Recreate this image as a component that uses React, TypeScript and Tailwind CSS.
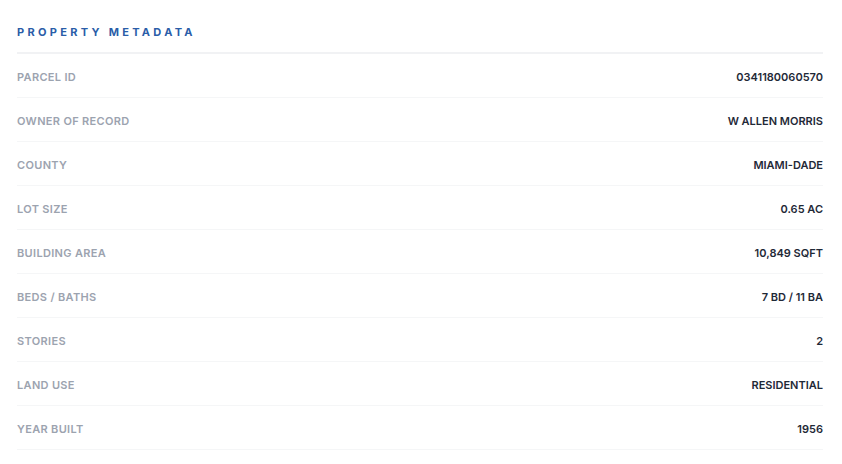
const rows = [
  { label: "Parcel ID", value: "0341180060570" },
  { label: "Owner of Record", value: "W ALLEN MORRIS" },
  { label: "County", value: "MIAMI-DADE" },
  { label: "Lot Size", value: "0.65 AC" },
  { label: "Building Area", value: "10,849 SQFT" },
  { label: "Beds / Baths", value: "7 BD / 11 BA" },
  { label: "Stories", value: "2" },
  { label: "Land Use", value: "RESIDENTIAL" },
  { label: "Year Built", value: "1956" },
]

export default function App() {
  return (
    <div className="min-h-[464px] bg-white pl-[17px] pr-[19px] font-['Inter',sans-serif]">
      <div className="border-b-2 border-[#f1f2f4] pt-[24px] pb-[12px]">
        <h2 className="text-[11px] leading-4 font-bold uppercase tracking-[0.3em] text-[#2a5da8]">
          Property Metadata
        </h2>
      </div>
      <dl>
        {rows.map((row) => (
          <div
            key={row.label}
            className="flex items-center justify-between h-[44px] pt-[2px] border-b border-[#f5f6f7]"
          >
            <dt className="text-[11px] leading-4 font-semibold uppercase tracking-[0.03em] text-[#9ca3af]">
              {row.label}
            </dt>
            <dd className="text-[11px] leading-4 font-semibold text-[#1f2937]">
              {row.value}
            </dd>
          </div>
        ))}
      </dl>
    </div>
  )
}
